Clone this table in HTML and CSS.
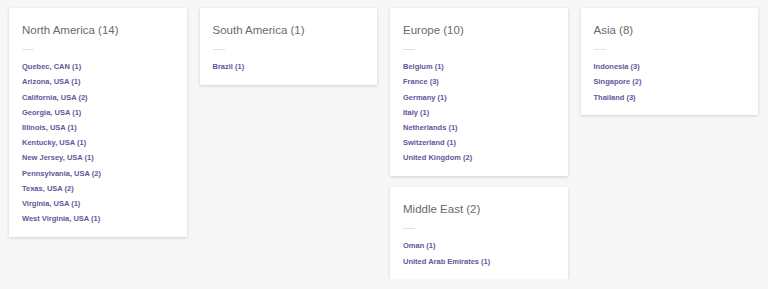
FILE: index.html
```html
<!DOCTYPE html>
<html lang="en">
<head>
<meta charset="utf-8">
<title>Regions</title>
<link rel="stylesheet" href="styles.css">
</head>
<body>
<div class="grid">
  <div class="col">
    <section class="card">
      <h2 class="card-title">North America (14)</h2>
      <hr class="rule">
      <ul class="list">
        <li><a href="#">Quebec, CAN (1)</a></li>
        <li><a href="#">Arizona, USA (1)</a></li>
        <li><a href="#">California, USA (2)</a></li>
        <li><a href="#">Georgia, USA (1)</a></li>
        <li><a href="#">Illinois, USA (1)</a></li>
        <li><a href="#">Kentucky, USA (1)</a></li>
        <li><a href="#">New Jersey, USA (1)</a></li>
        <li><a href="#">Pennsylvania, USA (2)</a></li>
        <li><a href="#">Texas, USA (2)</a></li>
        <li><a href="#">Virginia, USA (1)</a></li>
        <li><a href="#">West Virginia, USA (1)</a></li>
      </ul>
    </section>
  </div>
  <div class="col">
    <section class="card">
      <h2 class="card-title">South America (1)</h2>
      <hr class="rule">
      <ul class="list">
        <li><a href="#">Brazil (1)</a></li>
      </ul>
    </section>
  </div>
  <div class="col">
    <section class="card">
      <h2 class="card-title">Europe (10)</h2>
      <hr class="rule">
      <ul class="list">
        <li><a href="#">Belgium (1)</a></li>
        <li><a href="#">France (3)</a></li>
        <li><a href="#">Germany (1)</a></li>
        <li><a href="#">Italy (1)</a></li>
        <li><a href="#">Netherlands (1)</a></li>
        <li><a href="#">Switzerland (1)</a></li>
        <li><a href="#">United Kingdom (2)</a></li>
      </ul>
    </section>
    <section class="card">
      <h2 class="card-title">Middle East (2)</h2>
      <hr class="rule">
      <ul class="list">
        <li><a href="#">Oman (1)</a></li>
        <li><a href="#">United Arab Emirates (1)</a></li>
      </ul>
    </section>
  </div>
  <div class="col">
    <section class="card">
      <h2 class="card-title">Asia (8)</h2>
      <hr class="rule">
      <ul class="list">
        <li><a href="#">Indonesia (3)</a></li>
        <li><a href="#">Singapore (2)</a></li>
        <li><a href="#">Thailand (3)</a></li>
      </ul>
    </section>
  </div>
</div>
</body>
</html>
```

FILE: styles.css
```css
html, body {
  margin: 0;
  background: #f7f7f7;
}
body {
  padding: 8px 10px 0 9px;
  font-family: "Liberation Sans", Arial, sans-serif;
}
.grid {
  display: grid;
  grid-template-columns: repeat(4, 1fr);
  column-gap: 13px;
  align-items: start;
}
.col {
  display: flex;
  flex-direction: column;
  gap: 11px;
}
.card {
  background: #fff;
  box-shadow: 0 1px 3px rgba(0, 0, 0, 0.16);
  padding: 14px 13px 10.5px;
}
.card-title {
  margin: 0;
  font-size: 11.5px;
  line-height: 16px;
  font-weight: 400;
  color: #6a6a6a;
}
.rule {
  width: 12px;
  height: 1px;
  border: 0;
  background: #e0e0e0;
  margin: 11px 0 9.2px;
}
.list {
  list-style: none;
  margin: 0;
  padding: 0;
}
.list li {
  font-size: 7.5px;
  line-height: 15.2px;
  font-weight: 700;
}
.list a {
  color: #65559a;
  text-decoration: none;
}
```
